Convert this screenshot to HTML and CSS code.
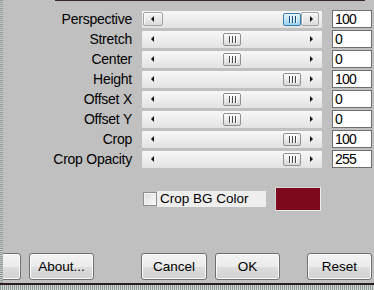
FILE: index.html
```html
<!DOCTYPE html>
<html>
<head>
<meta charset="utf-8">
<link rel="stylesheet" href="styles.css">
</head>
<body>
<div class="frame">
  <div class="main">
    <div class="edge-left"></div>
    <div class="dialog">
      <div class="top-line"></div>
      <div class="rows">
        <div class="row">
          <span class="label">Perspective</span>
          <div class="track active">
            <span class="arrow-btn"><span class="tri left"></span></span>
            <span class="rail"><span class="thumb" style="--p:1"></span></span>
            <span class="arrow-btn right"><span class="tri right"></span></span>
          </div>
          <span class="value">100</span>
        </div>
        <div class="row">
          <span class="label">Stretch</span>
          <div class="track">
            <span class="arrow-btn"><span class="tri left"></span></span>
            <span class="rail"><span class="thumb" style="--p:0.5"></span></span>
            <span class="arrow-btn right"><span class="tri right"></span></span>
          </div>
          <span class="value">0</span>
        </div>
        <div class="row">
          <span class="label">Center</span>
          <div class="track">
            <span class="arrow-btn"><span class="tri left"></span></span>
            <span class="rail"><span class="thumb" style="--p:0.5"></span></span>
            <span class="arrow-btn right"><span class="tri right"></span></span>
          </div>
          <span class="value">0</span>
        </div>
        <div class="row">
          <span class="label">Height</span>
          <div class="track">
            <span class="arrow-btn"><span class="tri left"></span></span>
            <span class="rail"><span class="thumb" style="--p:1"></span></span>
            <span class="arrow-btn right"><span class="tri right"></span></span>
          </div>
          <span class="value">100</span>
        </div>
        <div class="row">
          <span class="label">Offset X</span>
          <div class="track">
            <span class="arrow-btn"><span class="tri left"></span></span>
            <span class="rail"><span class="thumb" style="--p:0.5"></span></span>
            <span class="arrow-btn right"><span class="tri right"></span></span>
          </div>
          <span class="value">0</span>
        </div>
        <div class="row">
          <span class="label">Offset Y</span>
          <div class="track">
            <span class="arrow-btn"><span class="tri left"></span></span>
            <span class="rail"><span class="thumb" style="--p:0.5"></span></span>
            <span class="arrow-btn right"><span class="tri right"></span></span>
          </div>
          <span class="value">0</span>
        </div>
        <div class="row">
          <span class="label">Crop</span>
          <div class="track">
            <span class="arrow-btn"><span class="tri left"></span></span>
            <span class="rail"><span class="thumb" style="--p:1"></span></span>
            <span class="arrow-btn right"><span class="tri right"></span></span>
          </div>
          <span class="value">100</span>
        </div>
        <div class="row">
          <span class="label">Crop Opacity</span>
          <div class="track">
            <span class="arrow-btn"><span class="tri left"></span></span>
            <span class="rail"><span class="thumb" style="--p:1"></span></span>
            <span class="arrow-btn right"><span class="tri right"></span></span>
          </div>
          <span class="value">255</span>
        </div>
      </div>
      <div class="check-row">
        <span class="checkbox"></span>
        <span class="check-label">Crop BG Color</span>
        <span class="swatch"></span>
      </div>
      <div class="buttons">
        <span class="button"></span>
        <span class="button">About...</span>
        <span class="button cancel">Cancel</span>
        <span class="button">OK</span>
        <span class="button reset">Reset</span>
      </div>
    </div>
  </div>
  <div class="bottom-line"></div>
  <div class="bottom-edge"></div>
</div>
</body>
</html>
```
FILE: styles.css
```css
html, body {
  margin: 0;
  padding: 0;
  background: #c0c0c0;
}

.frame {
  width: 374px;
  height: 290px;
  display: flex;
  flex-direction: column;
  overflow: hidden;
  font-family: "Liberation Sans", Arial, sans-serif;
  color: #000;
}

.main {
  height: 283px;
  display: flex;
}

.edge-left {
  width: 3px;
  flex: none;
  background: repeating-linear-gradient(to bottom, #8d9c98 0 1px, #c4c8c6 1px 2px);
}

.dialog {
  flex: 1;
  display: flex;
  flex-direction: column;
  overflow: hidden;
  min-width: 0;
}

.top-line {
  height: 1px;
  margin-left: 52px;
  width: 310px;
  background: #3a2626;
}

.rows {
  margin-top: 9px;
  display: flex;
  flex-direction: column;
  gap: 2px;
}

.row {
  display: grid;
  grid-template-columns: 129px 180px 40px;
  column-gap: 10px;
  height: 18px;
  align-items: center;
}

.label {
  text-align: right;
  font-size: 14px;
  letter-spacing: -0.25px;
  line-height: 18px;
  white-space: nowrap;
}

.track {
  height: 17px;
  display: flex;
  align-items: center;
  padding: 0 3px 0 1px;
  background: linear-gradient(to bottom, #f7f7f7 0%, #ededed 50%, #e2e2e2 100%);
  border-radius: 1px;
}

.arrow-btn {
  width: 20px;
  height: 14px;
  flex: none;
  box-sizing: border-box;
  display: flex;
  align-items: center;
  justify-content: center;
  border: 1px solid transparent;
  border-radius: 2px;
}

.arrow-btn.right {
  width: 18px;
}

.track.active .arrow-btn {
  border-color: #a3a3a3;
  background: linear-gradient(to bottom, #f6f6f6, #dcdcdc);
  box-shadow: inset 1px 1px 0 #fff;
}

.tri {
  width: 0;
  height: 0;
  border-top: 3px solid transparent;
  border-bottom: 3px solid transparent;
}

.tri.left {
  border-right: 3px solid #111;
  margin-right: 2px;
}

.tri.right {
  border-left: 3px solid #111;
  margin-left: 2px;
}

.rail {
  flex: 1;
  height: 100%;
  position: relative;
}

.thumb {
  position: absolute;
  top: 2px;
  left: calc(var(--p) * (100% - 18px));
  width: 18px;
  height: 13px;
  box-sizing: border-box;
  border: 1px solid #8f8f8f;
  border-radius: 2px;
  background: linear-gradient(to bottom, #fbfbfb 0%, #ececec 50%, #d9d9d9 100%);
}

.thumb::before {
  content: "";
  position: absolute;
  left: 5px;
  top: 2px;
  width: 1px;
  height: 7px;
  background: #4a4a4a;
  box-shadow: 1px 0 #fff, 3px 0 #4a4a4a, 4px 0 #fff, 6px 0 #4a4a4a, 7px 0 #fff;
}

.track.active .thumb {
  border-color: #3c7fb1;
  background: linear-gradient(to bottom, #e5f4fc 0%, #c4e5f6 50%, #98d1ef 100%);
}

.track.active .thumb::before {
  background: #1e4f78;
  box-shadow: 1px 0 #eaf6fd, 3px 0 #1e4f78, 4px 0 #eaf6fd, 6px 0 #1e4f78, 7px 0 #eaf6fd;
}

.value {
  height: 18px;
  box-sizing: border-box;
  background: #fff;
  border: 1px solid #6f6f6f;
  font-size: 14px;
  letter-spacing: -0.8px;
  line-height: 16px;
  padding-left: 2px;
}

.check-row {
  margin-top: 19px;
  height: 24px;
  display: flex;
  align-items: center;
  padding-left: 140px;
}

.checkbox {
  width: 14px;
  height: 14px;
  box-sizing: border-box;
  border: 1px solid #8e8f8f;
  background: linear-gradient(135deg, #dcdcdc, #fbfbfb);
  box-shadow: inset 1px 1px 0 #f4f4f4;
}

.check-label {
  width: 109px;
  height: 16px;
  box-sizing: border-box;
  background: #eeeeee;
  font-size: 13.5px;
  line-height: 16px;
  padding-left: 3px;
  white-space: nowrap;
}

.swatch {
  margin-left: 9px;
  width: 46px;
  height: 24px;
  box-sizing: border-box;
  background: #7c0a1c;
  border: 1px solid #ececec;
  border-top-color: #d6d6d6;
  border-left-color: #d6d6d6;
}

.buttons {
  margin-top: 42px;
  height: 27px;
  display: flex;
  margin-left: -47px;
}

.button {
  width: 65px;
  height: 27px;
  flex: none;
  box-sizing: border-box;
  border: 1px solid #707070;
  border-radius: 3px;
  background: linear-gradient(to bottom, #f3f3f3 0%, #ebebeb 50%, #dddddd 51%, #d2d2d2 100%);
  box-shadow: inset 0 0 0 1px #fbfbfb;
  font-size: 13.5px;
  line-height: 25px;
  text-align: center;
  margin-right: 8px;
}

.button.cancel {
  margin-left: 39px;
  width: 66px;
}

.button.reset {
  margin-left: 19px;
  margin-right: 0;
}

.bottom-line {
  height: 2px;
  background: #2a1c1c;
}

.bottom-edge {
  height: 5px;
  background: repeating-linear-gradient(to right, #8d9c98 0 1px, #d2d4d3 1px 2px);
}
```
